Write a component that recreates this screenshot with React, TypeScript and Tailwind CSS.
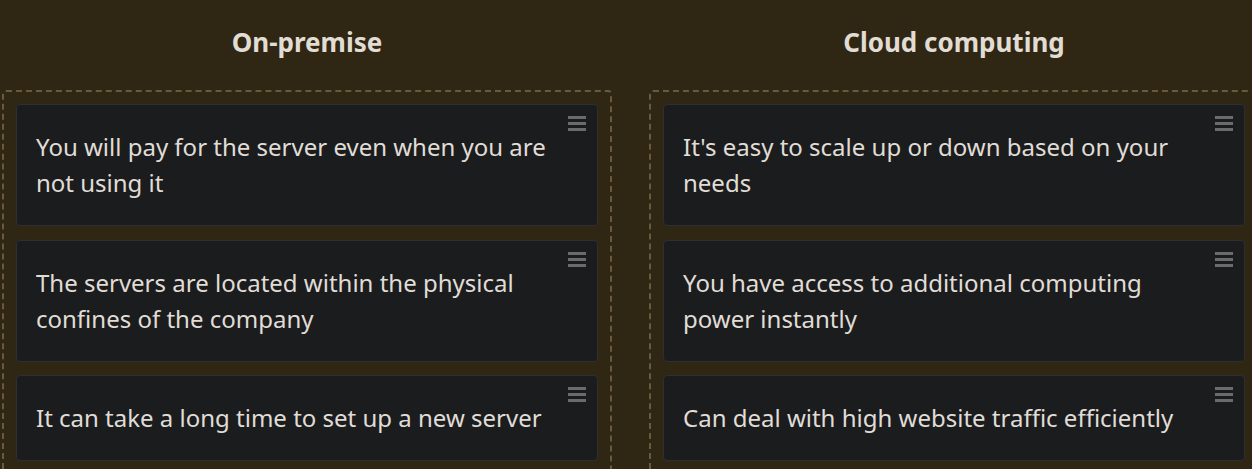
const columns = [
  {
    title: "On-premise",
    items: [
      "You will pay for the server even when you are not using it",
      "The servers are located within the physical confines of the company",
      "It can take a long time to set up a new server",
    ],
  },
  {
    title: "Cloud computing",
    items: [
      "It's easy to scale up or down based on your needs",
      "You have access to additional computing power instantly",
      "Can deal with high website traffic efficiently",
    ],
  },
];

function DragHandle() {
  return (
    <div className="absolute right-[11px] top-[11px] flex w-[18px] flex-col gap-[3px]">
      <span className="h-[3px] w-full bg-[#6b6b6b]" />
      <span className="h-[3px] w-full bg-[#6b6b6b]" />
      <span className="h-[3px] w-full bg-[#6b6b6b]" />
    </div>
  );
}

export default function App() {
  return (
    <div
      className="h-[469px] w-[1252px] overflow-hidden bg-[#2f2714] pl-[2px]"
      style={{ fontFamily: "'Noto Sans', sans-serif" }}
    >
      <div className="flex gap-[37px]">
        {columns.map((col) => (
          <div key={col.title} className="w-[610px] shrink-0">
            <div className="flex h-[90px] items-center justify-center pb-[5px]">
              <h2 className="text-[26px] font-bold text-[#e2ddd4]">
                {col.title}
              </h2>
            </div>
            <div className="flex flex-col gap-[13.5px] rounded-[4px] border-2 border-dashed border-[#685a3b] p-3">
              {col.items.map((item) => (
                <div
                  key={item}
                  className="relative rounded-[4px] border border-[#2e2f31] bg-[#1b1c1e] py-6 pl-[19px] pr-[40px]"
                >
                  <DragHandle />
                  <p className="text-[24px] leading-[36px] text-[#e0ddd7]">
                    {item}
                  </p>
                </div>
              ))}
            </div>
          </div>
        ))}
      </div>
    </div>
  );
}
